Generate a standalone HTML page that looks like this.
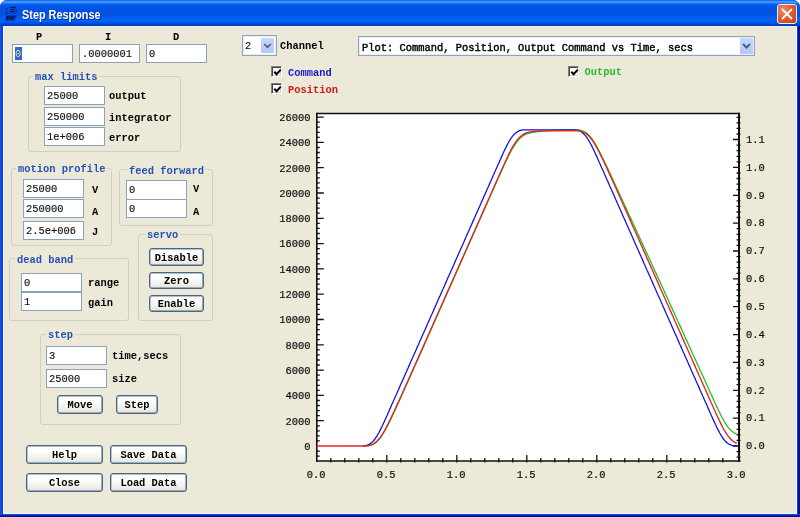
<!DOCTYPE html>
<html><head><meta charset="utf-8"><style>
*{box-sizing:border-box}
html,body{margin:0;padding:0}
body{width:800px;height:517px;overflow:hidden;background:#fff;position:relative;font-family:"Liberation Mono",monospace}
#win{will-change:transform;position:absolute;left:0;top:0;width:800px;height:517px;background:#0831d9;border-radius:7px 7px 0 0;overflow:hidden}
#title{position:absolute;left:0;top:0;width:800px;height:26px;
 background:linear-gradient(to bottom,#0a3fd0 0px,#3d95ff 1px,#3d95ff 2.5px,#0662f5 4px,#0054e3 7px,#0052de 14px,#0060f2 18px,#0064f8 21px,#0052e0 23px,#0040c4 25px,#0038b8 26px)}
#client{position:absolute;left:4px;top:27px;width:792px;height:486px;background:#ece9d8}
#wl{position:absolute;left:3px;top:26px;width:1px;height:488px;background:#f4f7ff}
#wr{position:absolute;left:796px;top:26px;width:1px;height:488px;background:#f4f7ff}
#wt{position:absolute;left:3px;top:26px;width:794px;height:1px;background:#e8eeff}
#wb{position:absolute;left:3px;top:513px;width:794px;height:1px;background:#f4f7ff}
#bl{position:absolute;left:0;top:26px;width:3px;height:491px;background:linear-gradient(to right,#1f5cf0,#0c46de 1.5px,#0a40d8 3px)}
#br{position:absolute;left:797px;top:26px;width:3px;height:491px;background:linear-gradient(to left,#001090,#00149c 1.5px,#2a50d0 3px)}
#bb{position:absolute;left:0;top:514px;width:800px;height:3px;background:linear-gradient(to bottom,#2d60ea 0,#0a2fc8 1px,#001a9c 2px,#00138c 3px)}
#ttext{position:absolute;left:22px;top:7px;font-family:"Liberation Sans",sans-serif;font-weight:bold;font-size:12.5px;line-height:16px;color:#fff;text-shadow:1px 1px 0 #0a2a9f;transform:scaleX(0.87);transform-origin:0 0}
#close{position:absolute;left:776.5px;top:4px;width:20px;height:19.5px;border:1px solid #e8eefc;border-radius:3px;
 background:radial-gradient(circle at 30% 30%,#f08a6a 0,#e0582e 50%,#c8401a 100%)}
#close svg{position:absolute;left:0;top:0}
.t{position:absolute;white-space:pre;font-size:10.42px;line-height:12px;color:#000;font-weight:bold}
.g{color:#2450b4}
.ed{position:absolute;background:#fff;border:1px solid #8ba2bd}
.et{position:absolute;white-space:pre;font-size:10.42px;line-height:12px;color:#111;font-weight:normal;-webkit-text-stroke:0.15px #111}
.grp{position:absolute;border:1px solid #d0d0bf;border-radius:3px}
.btn{position:absolute;padding-top:1px;border:1px solid #4a6786;border-radius:3px;background:linear-gradient(to bottom,#fff 0,#fbfbf9 40%,#f0f0ea 75%,#e3e2da 100%);box-shadow:inset 0 0 0 0.5px #6a8299,inset -1px -1px 0 #d6d0c5,inset 1px 1px 0 #fff;text-align:center;font-weight:bold;font-size:10.42px;color:#000;white-space:pre}
.ax{position:absolute;white-space:pre;font-size:10.42px;line-height:12px;color:#111;font-weight:normal;-webkit-text-stroke:0.2px #111}
.cb{position:absolute;width:11px;height:11px;background:#fff;border-top:1px solid #808080;border-left:1px solid #808080;border-right:1px solid #fff;border-bottom:1px solid #fff;box-shadow:inset 1px 1px 0 #404040,inset -1px -1px 0 #d4d0c8}
.cb svg{position:absolute;left:1px;top:1px}
.combo{position:absolute;background:#fff;border:1px solid #8ea4c0;box-shadow:inset 0 0 0 0.5px #d8e0ec}
.dd{position:absolute;background:linear-gradient(to bottom,#c6d6fc,#b4c8f6);border-radius:1px}
</style></head><body>
<div id="win">
 <div id="title"></div>
 <div id="bl"></div><div id="br"></div><div id="bb"></div>
 <div id="client"></div>
 <div id="wl"></div><div id="wr"></div><div id="wt"></div><div id="wb"></div>
 <svg style="position:absolute;left:2px;top:3px" width="20" height="20" viewBox="0 0 20 20">
  <g fill="#061a70">
   <rect x="8" y="3.8" width="5.8" height="1.4"/><rect x="8" y="6.2" width="4.8" height="1"/><rect x="8" y="8.2" width="4.8" height="1.2"/>
   <rect x="3.8" y="5" width="1.3" height="1.3"/><rect x="4" y="7.4" width="1.2" height="1.2"/><rect x="3" y="9.8" width="1.3" height="1.3"/><rect x="5.3" y="10" width="1.2" height="1.2"/>
   <rect x="13.8" y="7" width="1.3" height="1.3"/><rect x="12.8" y="9.8" width="1.3" height="1.3"/>
   <path d="M4.3 12.6h3.4l-1 4.8h-3.4z M8.2 12.6h4l-1 4.8h-4z M12.6 12.6h2.4l-0.3 1.2h-1.1l-0.8 3.6h-1.2z"/>
  </g>
  
 </svg>
 <div id="ttext">Step Response</div>
 <div id="close"><svg width="18" height="18"><path d="M4.5 4.5 L13.5 13.5 M13.5 4.5 L4.5 13.5" stroke="#fff" stroke-width="1.8" stroke-linecap="round"/></svg></div>

 <!-- PID -->
 <div class="t" style="left:36px;top:31px">P</div>
 <div class="t" style="left:105px;top:31px">I</div>
 <div class="t" style="left:173px;top:31px">D</div>
 <div class="ed" style="left:12px;top:44px;width:61px;height:19px"></div>
 <div style="position:absolute;left:15px;top:47px;width:7px;height:13px;background:#316ac5"></div>
 <div class="et" style="left:15px;top:48px;color:#fff">0</div>
 <div class="ed" style="left:79px;top:44px;width:61px;height:19px"></div>
 <div class="et" style="left:82px;top:48px">.0000001</div>
 <div class="ed" style="left:146px;top:44px;width:61px;height:19px"></div>
 <div class="et" style="left:149px;top:48px">0</div>

 <!-- max limits -->
 <div class="grp" style="left:28px;top:76px;width:153px;height:76px"></div>
 <div class="t g" style="left:33px;top:71.3px;background:#ece9d8;padding:0 2px">max limits</div>
 <div class="ed" style="left:44px;top:86px;width:61px;height:19px"></div>
 <div class="et" style="left:47px;top:90px">25000</div>
 <div class="t" style="left:109px;top:90px">output</div>
 <div class="ed" style="left:44px;top:107px;width:61px;height:19px"></div>
 <div class="et" style="left:47px;top:111px">250000</div>
 <div class="t" style="left:109px;top:111.5px">integrator</div>
 <div class="ed" style="left:44px;top:127px;width:61px;height:19px"></div>
 <div class="et" style="left:47px;top:131px">1e+006</div>
 <div class="t" style="left:109px;top:131.5px">error</div>

 <!-- motion profile -->
 <div class="grp" style="left:11px;top:168px;width:101px;height:78px"></div>
 <div class="t g" style="left:16px;top:163.3px;background:#ece9d8;padding:0 2px">motion profile</div>
 <div class="ed" style="left:23px;top:179px;width:61px;height:19px"></div>
 <div class="et" style="left:26px;top:183px">25000</div>
 <div class="t" style="left:92px;top:183.5px">V</div>
 <div class="ed" style="left:23px;top:199px;width:61px;height:19px"></div>
 <div class="et" style="left:26px;top:203px">250000</div>
 <div class="t" style="left:92px;top:206px">A</div>
 <div class="ed" style="left:23px;top:221px;width:61px;height:19px"></div>
 <div class="et" style="left:26px;top:225px">2.5e+006</div>
 <div class="t" style="left:92px;top:226.3px">J</div>

 <!-- feed forward -->
 <div class="grp" style="left:119px;top:169px;width:94px;height:57px"></div>
 <div class="t g" style="left:127px;top:165px;background:#ece9d8;padding:0 2px">feed forward</div>
 <div class="ed" style="left:126px;top:180px;width:61px;height:20px"></div>
 <div class="et" style="left:129px;top:184px">0</div>
 <div class="t" style="left:193px;top:183px">V</div>
 <div class="ed" style="left:126px;top:199px;width:61px;height:19px"></div>
 <div class="et" style="left:129px;top:203px">0</div>
 <div class="t" style="left:193px;top:206px">A</div>

 <!-- servo -->
 <div class="grp" style="left:138px;top:234px;width:75px;height:87px"></div>
 <div class="t g" style="left:145px;top:229px;background:#ece9d8;padding:0 2px">servo</div>
 <div class="btn" style="left:149px;top:248px;width:55px;height:18px;line-height:16px">Disable</div>
 <div class="btn" style="left:149px;top:272px;width:55px;height:17px;line-height:15px">Zero</div>
 <div class="btn" style="left:149px;top:295px;width:55px;height:17px;line-height:15px">Enable</div>

 <!-- dead band -->
 <div class="grp" style="left:9px;top:258px;width:120px;height:63px"></div>
 <div class="t g" style="left:15px;top:253.7px;background:#ece9d8;padding:0 2px">dead band</div>
 <div class="ed" style="left:21px;top:273px;width:61px;height:19px"></div>
 <div class="et" style="left:24px;top:277px">0</div>
 <div class="t" style="left:88px;top:277px">range</div>
 <div class="ed" style="left:21px;top:292px;width:61px;height:19px"></div>
 <div class="et" style="left:24px;top:296px">1</div>
 <div class="t" style="left:88px;top:297px">gain</div>

 <!-- step -->
 <div class="grp" style="left:40px;top:334px;width:141px;height:91px"></div>
 <div class="t g" style="left:46px;top:328.7px;background:#ece9d8;padding:0 2px">step</div>
 <div class="ed" style="left:46px;top:346px;width:61px;height:19px"></div>
 <div class="et" style="left:49px;top:350px">3</div>
 <div class="t" style="left:112px;top:350px">time,secs</div>
 <div class="ed" style="left:46px;top:369px;width:61px;height:19px"></div>
 <div class="et" style="left:49px;top:373px">25000</div>
 <div class="t" style="left:112px;top:373px">size</div>
 <div class="btn" style="left:57px;top:395px;width:46px;height:19px;line-height:17px">Move</div>
 <div class="btn" style="left:116px;top:395px;width:42px;height:19px;line-height:17px">Step</div>

 <!-- bottom buttons -->
 <div class="btn" style="left:26px;top:445px;width:77px;height:19px;line-height:17px">Help</div>
 <div class="btn" style="left:110px;top:445px;width:77px;height:19px;line-height:17px">Save Data</div>
 <div class="btn" style="left:26px;top:473px;width:77px;height:19px;line-height:17px">Close</div>
 <div class="btn" style="left:110px;top:473px;width:77px;height:19px;line-height:17px">Load Data</div>

 <!-- channel combo -->
 <div class="combo" style="left:241.5px;top:35px;width:35.5px;height:21px"></div>
 <div class="dd" style="left:261px;top:37.5px;width:13px;height:15.5px"><svg width="13" height="16"><path d="M3.2 6 L6.5 9.2 L9.8 6" fill="none" stroke="#4d6185" stroke-width="1.7"/></svg></div>
 <div class="et" style="left:245px;top:40px">2</div>
 <div class="t" style="left:280px;top:40px">Channel</div>

 <!-- plot combo -->
 <div class="combo" style="left:358px;top:36px;width:397px;height:20px"></div>
 <div class="dd" style="left:740px;top:38px;width:13px;height:16px"><svg width="13" height="16"><path d="M3 6 L6.5 9.5 L10 6" fill="none" stroke="#4d6185" stroke-width="2"/></svg></div>
 <div class="t" style="left:362px;top:41.7px;font-weight:normal;-webkit-text-stroke:0.4px #000">Plot: Command, Position, Output Command vs Time, secs</div>

 <!-- checkboxes -->
 <div class="cb" style="left:271px;top:66px"><svg width="9" height="9"><path d="M1.3 3.8 L3.6 6.3 L7.8 1.6" fill="none" stroke="#000" stroke-width="2.1"/></svg></div>
 <div class="t" style="left:288px;top:66.5px;color:#1818d0">Command</div>
 <div class="cb" style="left:271px;top:83px"><svg width="9" height="9"><path d="M1.3 3.8 L3.6 6.3 L7.8 1.6" fill="none" stroke="#000" stroke-width="2.1"/></svg></div>
 <div class="t" style="left:288px;top:83.5px;color:#d01818">Position</div>
 <div class="cb" style="left:568px;top:66px"><svg width="9" height="9"><path d="M1.3 3.8 L3.6 6.3 L7.8 1.6" fill="none" stroke="#000" stroke-width="2.1"/></svg></div>
 <div class="t" style="left:584.5px;top:65.8px;color:#2cba2c">Output</div>

<svg style="position:absolute;left:0;top:0" width="800" height="517">
<rect x="316.8" y="113.5" width="421.7" height="347.5" fill="#fff"/>
<path d="M316.8 113.5 H739.5" fill="none" stroke="#101010" stroke-width="1.4"/>
<path d="M316.8 112.8 V461.8" fill="none" stroke="#101010" stroke-width="1.6"/>
<path d="M316.0 461.0 H740.5" fill="none" stroke="#101010" stroke-width="1.6"/>
<path d="M739.0 112.8 V461.8" fill="none" stroke="#101010" stroke-width="2"/>
<path d="M316.8 456.1h3 M316.8 451.1h3 M316.8 440.9h3 M316.8 435.9h3 M316.8 430.8h3 M316.8 425.8h3 M316.8 420.7h7 M316.8 415.6h3 M316.8 410.6h3 M316.8 405.5h3 M316.8 400.5h3 M316.8 395.4h7 M316.8 390.3h3 M316.8 385.3h3 M316.8 380.2h3 M316.8 375.2h3 M316.8 370.1h7 M316.8 365.0h3 M316.8 360.0h3 M316.8 354.9h3 M316.8 349.9h3 M316.8 344.8h7 M316.8 339.7h3 M316.8 334.7h3 M316.8 329.6h3 M316.8 324.6h3 M316.8 319.5h7 M316.8 314.4h3 M316.8 309.4h3 M316.8 304.3h3 M316.8 299.3h3 M316.8 294.2h7 M316.8 289.1h3 M316.8 284.1h3 M316.8 279.0h3 M316.8 274.0h3 M316.8 268.9h7 M316.8 263.8h3 M316.8 258.8h3 M316.8 253.7h3 M316.8 248.7h3 M316.8 243.6h7 M316.8 238.5h3 M316.8 233.5h3 M316.8 228.4h3 M316.8 223.4h3 M316.8 218.3h7 M316.8 213.2h3 M316.8 208.2h3 M316.8 203.1h3 M316.8 198.1h3 M316.8 193.0h7 M316.8 187.9h3 M316.8 182.9h3 M316.8 177.8h3 M316.8 172.8h3 M316.8 167.7h7 M316.8 162.6h3 M316.8 157.6h3 M316.8 152.5h3 M316.8 147.5h3 M316.8 142.4h7 M316.8 137.3h3 M316.8 132.3h3 M316.8 127.2h3 M316.8 122.2h3 M316.8 117.1h7 M736.5 457.1h4 M736.5 451.6h4 M733.0 446.0h6 M736.5 440.4h4 M736.5 434.9h4 M736.5 429.3h4 M736.5 423.7h4 M733.0 418.1h6 M736.5 412.6h4 M736.5 407.0h4 M736.5 401.4h4 M736.5 395.9h4 M733.0 390.3h6 M736.5 384.7h4 M736.5 379.1h4 M736.5 373.6h4 M736.5 368.0h4 M733.0 362.4h6 M736.5 356.8h4 M736.5 351.3h4 M736.5 345.7h4 M736.5 340.1h4 M733.0 334.6h6 M736.5 329.0h4 M736.5 323.4h4 M736.5 317.8h4 M736.5 312.3h4 M733.0 306.7h6 M736.5 301.1h4 M736.5 295.6h4 M736.5 290.0h4 M736.5 284.4h4 M733.0 278.8h6 M736.5 273.3h4 M736.5 267.7h4 M736.5 262.1h4 M736.5 256.6h4 M733.0 251.0h6 M736.5 245.4h4 M736.5 239.8h4 M736.5 234.3h4 M736.5 228.7h4 M733.0 223.1h6 M736.5 217.5h4 M736.5 212.0h4 M736.5 206.4h4 M736.5 200.8h4 M733.0 195.3h6 M736.5 189.7h4 M736.5 184.1h4 M736.5 178.5h4 M736.5 173.0h4 M733.0 167.4h6 M736.5 161.8h4 M736.5 156.3h4 M736.5 150.7h4 M736.5 145.1h4 M733.0 139.5h6 M736.5 134.0h4 M736.5 128.4h4 M736.5 122.8h4 M736.5 117.3h4 M330.8 462.5v-4.5 M344.8 462.5v-4.5 M358.8 462.5v-4.5 M372.8 462.5v-4.5 M386.8 462.5v-7.5 M400.8 462.5v-4.5 M414.8 462.5v-4.5 M428.8 462.5v-4.5 M442.8 462.5v-4.5 M456.8 462.5v-7.5 M470.8 462.5v-4.5 M484.8 462.5v-4.5 M498.8 462.5v-4.5 M512.8 462.5v-4.5 M526.8 462.5v-7.5 M540.8 462.5v-4.5 M554.8 462.5v-4.5 M568.8 462.5v-4.5 M582.8 462.5v-4.5 M596.8 462.5v-7.5 M610.8 462.5v-4.5 M624.8 462.5v-4.5 M638.8 462.5v-4.5 M652.8 462.5v-4.5 M666.8 462.5v-7.5 M680.8 462.5v-4.5 M694.8 462.5v-4.5 M708.8 462.5v-4.5 M722.8 462.5v-4.5" fill="none" stroke="#101010" stroke-width="1.3"/>
<polyline fill="none" stroke="#1fbf1f" stroke-width="1.3" points="363.3,446.0 363.8,446.0 364.4,446.0 365.0,445.9 365.5,445.9 366.1,445.9 366.6,445.8 367.2,445.8 367.8,445.7 368.3,445.7 368.9,445.6 369.4,445.5 370.0,445.4 370.6,445.2 371.1,445.1 371.7,444.9 372.2,444.6 372.8,444.4 373.4,444.1 373.9,443.8 374.5,443.5 375.0,443.1 375.6,442.7 376.2,442.2 376.7,441.7 377.3,441.2 377.8,440.6 378.4,440.0 379.0,439.4 379.5,438.7 380.1,438.0 380.6,437.3 381.2,436.5 381.8,435.7 382.3,434.9 382.9,434.0 383.4,433.1 384.0,432.1 384.6,431.2 385.1,430.2 385.7,429.2 386.2,428.2 386.8,427.1 387.4,426.1 387.9,425.0 388.5,423.8 389.0,422.7 389.6,421.6 390.2,420.4 390.7,419.3 391.3,418.1 391.8,416.9 392.4,415.7 393.0,414.5 393.5,413.3 394.1,412.1 394.6,410.9 395.2,409.7 395.8,408.5 396.3,407.3 396.9,406.0 397.4,404.8 398.0,403.6 398.6,402.3 399.1,401.1 399.7,399.9 400.2,398.6 400.8,397.4 401.4,396.2 401.9,394.9 402.5,393.7 403.0,392.4 403.6,391.2 404.2,389.9 404.7,388.7 405.3,387.4 405.8,386.2 406.4,384.9 407.0,383.7 407.5,382.4 408.1,381.1 408.6,379.9 409.2,378.6 409.8,377.4 410.3,376.1 410.9,374.9 411.4,373.6 412.0,372.3 412.6,371.1 413.1,369.8 413.7,368.6 414.2,367.3 414.8,366.0 415.4,364.8 415.9,363.5 416.5,362.3 417.0,361.0 417.6,359.7 418.2,358.5 418.7,357.2 419.3,356.0 419.8,354.7 420.4,353.4 421.0,352.2 421.5,350.9 422.1,349.7 422.6,348.4 423.2,347.1 423.8,345.9 424.3,344.6 424.9,343.3 425.4,342.1 426.0,340.8 426.6,339.6 427.1,338.3 427.7,337.0 428.2,335.8 428.8,334.5 429.4,333.2 429.9,332.0 430.5,330.7 431.0,329.5 431.6,328.2 432.2,326.9 432.7,325.7 433.3,324.4 433.8,323.1 434.4,321.9 435.0,320.6 435.5,319.4 436.1,318.1 436.6,316.8 437.2,315.6 437.8,314.3 438.3,313.0 438.9,311.8 439.4,310.5 440.0,309.3 440.6,308.0 441.1,306.7 441.7,305.5 442.2,304.2 442.8,302.9 443.4,301.7 443.9,300.4 444.5,299.1 445.0,297.9 445.6,296.6 446.2,295.4 446.7,294.1 447.3,292.8 447.8,291.6 448.4,290.3 449.0,289.0 449.5,287.8 450.1,286.5 450.6,285.2 451.2,284.0 451.8,282.7 452.3,281.5 452.9,280.2 453.4,278.9 454.0,277.7 454.6,276.4 455.1,275.1 455.7,273.9 456.2,272.6 456.8,271.3 457.4,270.1 457.9,268.8 458.5,267.6 459.0,266.3 459.6,265.0 460.2,263.8 460.7,262.5 461.3,261.2 461.8,260.0 462.4,258.7 463.0,257.4 463.5,256.2 464.1,254.9 464.6,253.7 465.2,252.4 465.8,251.1 466.3,249.9 466.9,248.6 467.4,247.3 468.0,246.1 468.6,244.8 469.1,243.5 469.7,242.3 470.2,241.0 470.8,239.8 471.4,238.5 471.9,237.2 472.5,236.0 473.0,234.7 473.6,233.4 474.2,232.2 474.7,230.9 475.3,229.6 475.8,228.4 476.4,227.1 477.0,225.9 477.5,224.6 478.1,223.3 478.6,222.1 479.2,220.8 479.8,219.5 480.3,218.3 480.9,217.0 481.4,215.7 482.0,214.5 482.6,213.2 483.1,212.0 483.7,210.7 484.2,209.4 484.8,208.2 485.4,206.9 485.9,205.6 486.5,204.4 487.0,203.1 487.6,201.8 488.2,200.6 488.7,199.3 489.3,198.1 489.8,196.8 490.4,195.5 491.0,194.3 491.5,193.0 492.1,191.7 492.6,190.5 493.2,189.2 493.8,187.9 494.3,186.7 494.9,185.4 495.4,184.1 496.0,182.9 496.6,181.6 497.1,180.4 497.7,179.1 498.2,177.8 498.8,176.6 499.4,175.4 499.9,174.1 500.5,172.9 501.0,171.7 501.6,170.5 502.2,169.3 502.7,168.1 503.3,166.9 503.8,165.7 504.4,164.5 505.0,163.3 505.5,162.1 506.1,160.9 506.6,159.8 507.2,158.6 507.8,157.5 508.3,156.3 508.9,155.2 509.4,154.1 510.0,153.1 510.6,152.0 511.1,151.0 511.7,150.0 512.2,149.0 512.8,148.1 513.4,147.1 513.9,146.3 514.5,145.4 515.0,144.6 515.6,143.8 516.2,143.0 516.7,142.2 517.3,141.5 517.8,140.8 518.4,140.1 519.0,139.4 519.5,138.9 520.1,138.3 520.6,137.8 521.2,137.3 521.8,136.8 522.3,136.4 522.9,136.0 523.4,135.6 524.0,135.3 524.6,134.9 525.1,134.7 525.7,134.4 526.2,134.1 526.8,133.9 527.4,133.7 527.9,133.5 528.5,133.3 529.0,133.2 529.6,133.0 530.2,132.9 530.7,132.8 531.3,132.6 531.8,132.5 532.4,132.4 533.0,132.3 533.5,132.2 534.1,132.1 534.6,132.1 535.2,132.0 535.8,131.9 536.3,131.8 536.9,131.8 537.4,131.7 538.0,131.6 538.6,131.6 539.1,131.5 539.7,131.4 540.2,131.4 540.8,131.3 541.4,131.3 541.9,131.2 542.5,131.2 543.0,131.1 543.6,131.1 544.2,131.1 544.7,131.0 545.3,131.0 545.8,130.9 546.4,130.9 547.0,130.8 547.5,130.8 548.1,130.8 548.6,130.7 549.2,130.7 549.8,130.7 550.3,130.6 550.9,130.6 551.4,130.5 552.0,130.5 552.6,130.5 553.1,130.4 553.7,130.4 554.2,130.4 554.8,130.3 555.4,130.3 555.9,130.3 556.5,130.3 557.0,130.2 557.6,130.2 558.2,130.2 558.7,130.2 559.3,130.1 559.8,130.1 560.4,130.1 561.0,130.1 561.5,130.1 562.1,130.0 562.6,130.0 563.2,130.0 563.8,130.0 564.3,129.9 564.9,129.9 565.4,129.9 566.0,129.9 566.6,129.9 567.1,129.8 567.7,129.8 568.2,129.8 568.8,129.8 569.4,129.8 569.9,129.8 570.5,129.8 571.0,129.8 571.6,129.8 572.2,129.8 572.7,129.8 573.3,129.8 573.8,129.8 574.4,129.8 575.0,129.8 575.5,129.8 576.1,129.8 576.6,129.8 577.2,129.9 577.8,129.9 578.3,130.0 578.9,130.0 579.4,130.1 580.0,130.2 580.6,130.3 581.1,130.5 581.7,130.6 582.2,130.8 582.8,131.0 583.4,131.2 583.9,131.5 584.5,131.8 585.0,132.1 585.6,132.4 586.2,132.8 586.7,133.2 587.3,133.7 587.8,134.2 588.4,134.7 589.0,135.2 589.5,135.8 590.1,136.5 590.6,137.2 591.2,137.9 591.8,138.6 592.3,139.4 592.9,140.2 593.4,141.1 594.0,141.9 594.6,142.8 595.1,143.8 595.7,144.7 596.2,145.7 596.8,146.7 597.4,147.7 597.9,148.8 598.5,149.8 599.0,150.9 599.6,151.9 600.2,153.0 600.7,154.1 601.3,155.2 601.8,156.3 602.4,157.5 603.0,158.6 603.5,159.7 604.1,160.9 604.6,162.1 605.2,163.2 605.8,164.4 606.3,165.6 606.9,166.7 607.4,167.9 608.0,169.1 608.6,170.3 609.1,171.5 609.7,172.7 610.2,173.9 610.8,175.1 611.4,176.3 611.9,177.5 612.5,178.7 613.0,179.9 613.6,181.1 614.2,182.3 614.7,183.5 615.3,184.8 615.8,186.0 616.4,187.2 617.0,188.4 617.5,189.6 618.1,190.8 618.6,192.1 619.2,193.3 619.8,194.5 620.3,195.7 620.9,196.9 621.4,198.1 622.0,199.4 622.6,200.6 623.1,201.8 623.7,203.0 624.2,204.3 624.8,205.5 625.4,206.7 625.9,207.9 626.5,209.1 627.0,210.3 627.6,211.5 628.2,212.8 628.7,214.0 629.3,215.2 629.8,216.4 630.4,217.6 631.0,218.8 631.5,220.1 632.1,221.3 632.6,222.5 633.2,223.7 633.8,224.9 634.3,226.1 634.9,227.3 635.4,228.6 636.0,229.8 636.6,231.0 637.1,232.2 637.7,233.4 638.2,234.6 638.8,235.9 639.4,237.1 639.9,238.3 640.5,239.5 641.0,240.7 641.6,241.9 642.2,243.2 642.7,244.4 643.3,245.6 643.8,246.8 644.4,248.0 645.0,249.3 645.5,250.5 646.1,251.7 646.6,252.9 647.2,254.1 647.8,255.3 648.3,256.6 648.9,257.8 649.4,259.0 650.0,260.2 650.6,261.4 651.1,262.6 651.7,263.9 652.2,265.1 652.8,266.3 653.4,267.5 653.9,268.7 654.5,270.0 655.0,271.2 655.6,272.4 656.2,273.6 656.7,274.8 657.3,276.0 657.8,277.3 658.4,278.5 659.0,279.7 659.5,280.9 660.1,282.1 660.6,283.3 661.2,284.6 661.8,285.8 662.3,287.0 662.9,288.2 663.4,289.5 664.0,290.7 664.6,291.9 665.1,293.2 665.7,294.4 666.2,295.6 666.8,296.8 667.4,298.1 667.9,299.3 668.5,300.5 669.0,301.8 669.6,303.0 670.2,304.2 670.7,305.5 671.3,306.7 671.8,307.9 672.4,309.1 673.0,310.4 673.5,311.6 674.1,312.8 674.6,314.1 675.2,315.3 675.8,316.5 676.3,317.8 676.9,319.0 677.4,320.2 678.0,321.5 678.6,322.7 679.1,323.9 679.7,325.1 680.2,326.4 680.8,327.6 681.4,328.8 681.9,330.1 682.5,331.3 683.0,332.5 683.6,333.8 684.2,335.0 684.7,336.2 685.3,337.5 685.8,338.7 686.4,339.9 687.0,341.1 687.5,342.4 688.1,343.6 688.6,344.8 689.2,346.1 689.8,347.3 690.3,348.5 690.9,349.8 691.4,351.0 692.0,352.2 692.6,353.5 693.1,354.7 693.7,355.9 694.2,357.1 694.8,358.4 695.4,359.6 695.9,360.8 696.5,362.1 697.0,363.3 697.6,364.5 698.2,365.8 698.7,367.0 699.3,368.2 699.8,369.4 700.4,370.7 701.0,371.9 701.5,373.1 702.1,374.4 702.6,375.6 703.2,376.8 703.8,378.1 704.3,379.3 704.9,380.5 705.4,381.8 706.0,383.0 706.6,384.3 707.1,385.5 707.7,386.7 708.2,388.0 708.8,389.2 709.4,390.4 709.9,391.7 710.5,392.9 711.0,394.1 711.6,395.4 712.2,396.6 712.7,397.8 713.3,399.1 713.8,400.3 714.4,401.5 715.0,402.7 715.5,404.0 716.1,405.2 716.6,406.4 717.2,407.6 717.8,408.8 718.3,410.0 718.9,411.1 719.4,412.3 720.0,413.4 720.6,414.5 721.1,415.6 721.7,416.7 722.2,417.8 722.8,418.8 723.4,419.8 723.9,420.8 724.5,421.8 725.0,422.7 725.6,423.6 726.2,424.5 726.7,425.3 727.3,426.1 727.8,426.9 728.4,427.6 729.0,428.3 729.5,428.9 730.1,429.5 730.6,430.1 731.2,430.6 731.8,431.1 732.3,431.6 732.9,432.0 733.4,432.4 734.0,432.8 734.6,433.1 735.1,433.4 735.7,433.7 736.2,433.9 736.8,434.2 736.8,434.2"/>
<polyline fill="none" stroke="#1010e0" stroke-width="1.3" points="363.3,445.9 363.8,445.8 364.4,445.8 365.0,445.7 365.5,445.6 366.1,445.5 366.6,445.3 367.2,445.1 367.8,444.9 368.3,444.7 368.9,444.4 369.4,444.1 370.0,443.8 370.6,443.4 371.1,443.0 371.7,442.5 372.2,442.0 372.8,441.5 373.4,440.9 373.9,440.2 374.5,439.5 375.0,438.8 375.6,438.0 376.2,437.2 376.7,436.3 377.3,435.4 377.8,434.5 378.4,433.5 379.0,432.5 379.5,431.4 380.1,430.4 380.6,429.3 381.2,428.1 381.8,427.0 382.3,425.8 382.9,424.6 383.4,423.4 384.0,422.2 384.6,421.0 385.1,419.7 385.7,418.5 386.2,417.2 386.8,416.0 387.4,414.7 387.9,413.4 388.5,412.2 389.0,410.9 389.6,409.6 390.2,408.4 390.7,407.1 391.3,405.8 391.8,404.6 392.4,403.3 393.0,402.0 393.5,400.8 394.1,399.5 394.6,398.2 395.2,397.0 395.8,395.7 396.3,394.5 396.9,393.2 397.4,391.9 398.0,390.7 398.6,389.4 399.1,388.1 399.7,386.9 400.2,385.6 400.8,384.3 401.4,383.1 401.9,381.8 402.5,380.5 403.0,379.3 403.6,378.0 404.2,376.7 404.7,375.5 405.3,374.2 405.8,372.9 406.4,371.7 407.0,370.4 407.5,369.2 408.1,367.9 408.6,366.6 409.2,365.4 409.8,364.1 410.3,362.8 410.9,361.6 411.4,360.3 412.0,359.0 412.6,357.8 413.1,356.5 413.7,355.2 414.2,354.0 414.8,352.7 415.4,351.4 415.9,350.2 416.5,348.9 417.0,347.6 417.6,346.4 418.2,345.1 418.7,343.9 419.3,342.6 419.8,341.3 420.4,340.1 421.0,338.8 421.5,337.5 422.1,336.3 422.6,335.0 423.2,333.7 423.8,332.5 424.3,331.2 424.9,329.9 425.4,328.7 426.0,327.4 426.6,326.1 427.1,324.9 427.7,323.6 428.2,322.3 428.8,321.1 429.4,319.8 429.9,318.6 430.5,317.3 431.0,316.0 431.6,314.8 432.2,313.5 432.7,312.2 433.3,311.0 433.8,309.7 434.4,308.4 435.0,307.2 435.5,305.9 436.1,304.6 436.6,303.4 437.2,302.1 437.8,300.8 438.3,299.6 438.9,298.3 439.4,297.0 440.0,295.8 440.6,294.5 441.1,293.3 441.7,292.0 442.2,290.7 442.8,289.5 443.4,288.2 443.9,286.9 444.5,285.7 445.0,284.4 445.6,283.1 446.2,281.9 446.7,280.6 447.3,279.3 447.8,278.1 448.4,276.8 449.0,275.5 449.5,274.3 450.1,273.0 450.6,271.7 451.2,270.5 451.8,269.2 452.3,268.0 452.9,266.7 453.4,265.4 454.0,264.2 454.6,262.9 455.1,261.6 455.7,260.4 456.2,259.1 456.8,257.8 457.4,256.6 457.9,255.3 458.5,254.0 459.0,252.8 459.6,251.5 460.2,250.2 460.7,249.0 461.3,247.7 461.8,246.4 462.4,245.2 463.0,243.9 463.5,242.7 464.1,241.4 464.6,240.1 465.2,238.9 465.8,237.6 466.3,236.3 466.9,235.1 467.4,233.8 468.0,232.5 468.6,231.3 469.1,230.0 469.7,228.7 470.2,227.5 470.8,226.2 471.4,224.9 471.9,223.7 472.5,222.4 473.0,221.1 473.6,219.9 474.2,218.6 474.7,217.4 475.3,216.1 475.8,214.8 476.4,213.6 477.0,212.3 477.5,211.0 478.1,209.8 478.6,208.5 479.2,207.2 479.8,206.0 480.3,204.7 480.9,203.4 481.4,202.2 482.0,200.9 482.6,199.6 483.1,198.4 483.7,197.1 484.2,195.8 484.8,194.6 485.4,193.3 485.9,192.1 486.5,190.8 487.0,189.5 487.6,188.3 488.2,187.0 488.7,185.7 489.3,184.5 489.8,183.2 490.4,181.9 491.0,180.7 491.5,179.4 492.1,178.1 492.6,176.9 493.2,175.6 493.8,174.3 494.3,173.1 494.9,171.8 495.4,170.5 496.0,169.3 496.6,168.0 497.1,166.8 497.7,165.5 498.2,164.2 498.8,163.0 499.4,161.7 499.9,160.4 500.5,159.2 501.0,157.9 501.6,156.6 502.2,155.4 502.7,154.2 503.3,152.9 503.8,151.7 504.4,150.5 505.0,149.4 505.5,148.2 506.1,147.1 506.6,145.9 507.2,144.9 507.8,143.8 508.3,142.8 508.9,141.8 509.4,140.8 510.0,139.9 510.6,139.0 511.1,138.1 511.7,137.3 512.2,136.6 512.8,135.9 513.4,135.2 513.9,134.6 514.5,134.0 515.0,133.5 515.6,133.0 516.2,132.6 516.7,132.2 517.3,131.8 517.8,131.5 518.4,131.2 519.0,130.9 519.5,130.7 520.1,130.5 520.6,130.4 521.2,130.2 521.8,130.1 522.3,130.0 522.9,129.9 523.4,129.9 524.0,129.8 524.6,129.8 525.1,129.8 525.7,129.8 526.2,129.8 526.8,129.8 527.4,129.8 527.9,129.8 528.5,129.8 529.0,129.8 529.6,129.8 530.2,129.8 530.7,129.8 531.3,129.8 531.8,129.8 532.4,129.8 533.0,129.8 533.5,129.8 534.1,129.8 534.6,129.8 535.2,129.8 535.8,129.8 536.3,129.8 536.9,129.8 537.4,129.8 538.0,129.8 538.6,129.8 539.1,129.8 539.7,129.8 540.2,129.8 540.8,129.8 541.4,129.8 541.9,129.8 542.5,129.8 543.0,129.8 543.6,129.8 544.2,129.8 544.7,129.8 545.3,129.8 545.8,129.8 546.4,129.8 547.0,129.8 547.5,129.8 548.1,129.8 548.6,129.8 549.2,129.8 549.8,129.8 550.3,129.8 550.9,129.8 551.4,129.8 552.0,129.8 552.6,129.8 553.1,129.8 553.7,129.8 554.2,129.8 554.8,129.8 555.4,129.8 555.9,129.8 556.5,129.8 557.0,129.8 557.6,129.8 558.2,129.8 558.7,129.8 559.3,129.8 559.8,129.8 560.4,129.8 561.0,129.8 561.5,129.8 562.1,129.8 562.6,129.8 563.2,129.8 563.8,129.8 564.3,129.8 564.9,129.8 565.4,129.8 566.0,129.8 566.6,129.8 567.1,129.8 567.7,129.8 568.2,129.8 568.8,129.8 569.4,129.8 569.9,129.8 570.5,129.8 571.0,129.8 571.6,129.8 572.2,129.8 572.7,129.8 573.3,129.8 573.8,129.8 574.4,129.8 575.0,129.9 575.5,129.9 576.1,130.0 576.6,130.1 577.2,130.2 577.8,130.4 578.3,130.5 578.9,130.7 579.4,130.9 580.0,131.2 580.6,131.5 581.1,131.8 581.7,132.2 582.2,132.6 582.8,133.0 583.4,133.5 583.9,134.0 584.5,134.6 585.0,135.2 585.6,135.9 586.2,136.6 586.7,137.3 587.3,138.1 587.8,139.0 588.4,139.9 589.0,140.8 589.5,141.8 590.1,142.8 590.6,143.8 591.2,144.9 591.8,145.9 592.3,147.1 592.9,148.2 593.4,149.4 594.0,150.5 594.6,151.7 595.1,152.9 595.7,154.2 596.2,155.4 596.8,156.6 597.4,157.9 597.9,159.2 598.5,160.4 599.0,161.7 599.6,163.0 600.2,164.2 600.7,165.5 601.3,166.8 601.8,168.0 602.4,169.3 603.0,170.5 603.5,171.8 604.1,173.1 604.6,174.3 605.2,175.6 605.8,176.9 606.3,178.1 606.9,179.4 607.4,180.7 608.0,181.9 608.6,183.2 609.1,184.5 609.7,185.7 610.2,187.0 610.8,188.3 611.4,189.5 611.9,190.8 612.5,192.1 613.0,193.3 613.6,194.6 614.2,195.8 614.7,197.1 615.3,198.4 615.8,199.6 616.4,200.9 617.0,202.2 617.5,203.4 618.1,204.7 618.6,206.0 619.2,207.2 619.8,208.5 620.3,209.8 620.9,211.0 621.4,212.3 622.0,213.6 622.6,214.8 623.1,216.1 623.7,217.4 624.2,218.6 624.8,219.9 625.4,221.1 625.9,222.4 626.5,223.7 627.0,224.9 627.6,226.2 628.2,227.5 628.7,228.7 629.3,230.0 629.8,231.3 630.4,232.5 631.0,233.8 631.5,235.1 632.1,236.3 632.6,237.6 633.2,238.9 633.8,240.1 634.3,241.4 634.9,242.7 635.4,243.9 636.0,245.2 636.6,246.4 637.1,247.7 637.7,249.0 638.2,250.2 638.8,251.5 639.4,252.8 639.9,254.0 640.5,255.3 641.0,256.6 641.6,257.8 642.2,259.1 642.7,260.4 643.3,261.6 643.8,262.9 644.4,264.2 645.0,265.4 645.5,266.7 646.1,268.0 646.6,269.2 647.2,270.5 647.8,271.7 648.3,273.0 648.9,274.3 649.4,275.5 650.0,276.8 650.6,278.1 651.1,279.3 651.7,280.6 652.2,281.9 652.8,283.1 653.4,284.4 653.9,285.7 654.5,286.9 655.0,288.2 655.6,289.5 656.2,290.7 656.7,292.0 657.3,293.3 657.8,294.5 658.4,295.8 659.0,297.0 659.5,298.3 660.1,299.6 660.6,300.8 661.2,302.1 661.8,303.4 662.3,304.6 662.9,305.9 663.4,307.2 664.0,308.4 664.6,309.7 665.1,311.0 665.7,312.2 666.2,313.5 666.8,314.8 667.4,316.0 667.9,317.3 668.5,318.6 669.0,319.8 669.6,321.1 670.2,322.3 670.7,323.6 671.3,324.9 671.8,326.1 672.4,327.4 673.0,328.7 673.5,329.9 674.1,331.2 674.6,332.5 675.2,333.7 675.8,335.0 676.3,336.3 676.9,337.5 677.4,338.8 678.0,340.1 678.6,341.3 679.1,342.6 679.7,343.9 680.2,345.1 680.8,346.4 681.4,347.6 681.9,348.9 682.5,350.2 683.0,351.4 683.6,352.7 684.2,354.0 684.7,355.2 685.3,356.5 685.8,357.8 686.4,359.0 687.0,360.3 687.5,361.6 688.1,362.8 688.6,364.1 689.2,365.4 689.8,366.6 690.3,367.9 690.9,369.2 691.4,370.4 692.0,371.7 692.6,372.9 693.1,374.2 693.7,375.5 694.2,376.7 694.8,378.0 695.4,379.3 695.9,380.5 696.5,381.8 697.0,383.1 697.6,384.3 698.2,385.6 698.7,386.9 699.3,388.1 699.8,389.4 700.4,390.7 701.0,391.9 701.5,393.2 702.1,394.5 702.6,395.7 703.2,397.0 703.8,398.2 704.3,399.5 704.9,400.8 705.4,402.0 706.0,403.3 706.6,404.6 707.1,405.8 707.7,407.1 708.2,408.4 708.8,409.6 709.4,410.9 709.9,412.2 710.5,413.4 711.0,414.7 711.6,416.0 712.2,417.2 712.7,418.5 713.3,419.7 713.8,421.0 714.4,422.2 715.0,423.4 715.5,424.6 716.1,425.8 716.6,427.0 717.2,428.1 717.8,429.3 718.3,430.4 718.9,431.4 719.4,432.5 720.0,433.5 720.6,434.5 721.1,435.4 721.7,436.3 722.2,437.2 722.8,438.0 723.4,438.8 723.9,439.5 724.5,440.2 725.0,440.9 725.6,441.5 726.2,442.0 726.7,442.5 727.3,443.0 727.8,443.4 728.4,443.8 729.0,444.1 729.5,444.4 730.1,444.7 730.6,444.9 731.2,445.1 731.8,445.3 732.3,445.5 732.9,445.6 733.4,445.7 734.0,445.8 734.6,445.8 735.1,445.9 735.7,445.9 736.2,446.0 736.8,446.0 736.8,446.0"/>
<polyline fill="none" stroke="#e02828" stroke-width="1.4" points="316.8,446.0 317.4,446.0 317.9,446.0 318.5,446.0 319.0,446.0 319.6,446.0 320.2,446.0 320.7,446.0 321.3,446.0 321.8,446.0 322.4,446.0 323.0,446.0 323.5,446.0 324.1,446.0 324.6,446.0 325.2,446.0 325.8,446.0 326.3,446.0 326.9,446.0 327.4,446.0 328.0,446.0 328.6,446.0 329.1,446.0 329.7,446.0 330.2,446.0 330.8,446.0 331.4,446.0 331.9,446.0 332.5,446.0 333.0,446.0 333.6,446.0 334.2,446.0 334.7,446.0 335.3,446.0 335.8,446.0 336.4,446.0 337.0,446.0 337.5,446.0 338.1,446.0 338.6,446.0 339.2,446.0 339.8,446.0 340.3,446.0 340.9,446.0 341.4,446.0 342.0,446.0 342.6,446.0 343.1,446.0 343.7,446.0 344.2,446.0 344.8,446.0 345.4,446.0 345.9,446.0 346.5,446.0 347.0,446.0 347.6,446.0 348.2,446.0 348.7,446.0 349.3,446.0 349.8,446.0 350.4,446.0 351.0,446.0 351.5,446.0 352.1,446.0 352.6,446.0 353.2,446.0 353.8,446.0 354.3,446.0 354.9,446.0 355.4,446.0 356.0,446.0 356.6,446.0 357.1,446.0 357.7,446.0 358.2,446.0 358.8,446.0 359.4,446.0 359.9,446.0 360.5,446.0 361.0,446.0 361.6,446.0 362.2,446.0 362.7,446.0 363.3,446.0 363.8,446.0 364.4,446.0 365.0,445.9 365.5,445.9 366.1,445.9 366.6,445.8 367.2,445.8 367.8,445.7 368.3,445.6 368.9,445.5 369.4,445.4 370.0,445.2 370.6,445.1 371.1,444.9 371.7,444.7 372.2,444.4 372.8,444.2 373.4,443.9 373.9,443.5 374.5,443.2 375.0,442.8 375.6,442.3 376.2,441.9 376.7,441.4 377.3,440.8 377.8,440.2 378.4,439.6 379.0,439.0 379.5,438.3 380.1,437.5 380.6,436.8 381.2,436.0 381.8,435.1 382.3,434.3 382.9,433.4 383.4,432.5 384.0,431.5 384.6,430.6 385.1,429.6 385.7,428.5 386.2,427.5 386.8,426.4 387.4,425.4 387.9,424.3 388.5,423.1 389.0,422.0 389.6,420.9 390.2,419.7 390.7,418.6 391.3,417.4 391.8,416.2 392.4,415.0 393.0,413.9 393.5,412.7 394.1,411.5 394.6,410.2 395.2,409.0 395.8,407.8 396.3,406.6 396.9,405.4 397.4,404.2 398.0,402.9 398.6,401.7 399.1,400.5 399.7,399.2 400.2,398.0 400.8,396.7 401.4,395.5 401.9,394.3 402.5,393.0 403.0,391.8 403.6,390.5 404.2,389.3 404.7,388.0 405.3,386.8 405.8,385.5 406.4,384.3 407.0,383.0 407.5,381.8 408.1,380.5 408.6,379.3 409.2,378.0 409.8,376.8 410.3,375.5 410.9,374.3 411.4,373.0 412.0,371.7 412.6,370.5 413.1,369.2 413.7,368.0 414.2,366.7 414.8,365.5 415.4,364.2 415.9,362.9 416.5,361.7 417.0,360.4 417.6,359.2 418.2,357.9 418.7,356.7 419.3,355.4 419.8,354.1 420.4,352.9 421.0,351.6 421.5,350.4 422.1,349.1 422.6,347.8 423.2,346.6 423.8,345.3 424.3,344.1 424.9,342.8 425.4,341.5 426.0,340.3 426.6,339.0 427.1,337.8 427.7,336.5 428.2,335.2 428.8,334.0 429.4,332.7 429.9,331.5 430.5,330.2 431.0,328.9 431.6,327.7 432.2,326.4 432.7,325.2 433.3,323.9 433.8,322.6 434.4,321.4 435.0,320.1 435.5,318.9 436.1,317.6 436.6,316.3 437.2,315.1 437.8,313.8 438.3,312.5 438.9,311.3 439.4,310.0 440.0,308.8 440.6,307.5 441.1,306.2 441.7,305.0 442.2,303.7 442.8,302.5 443.4,301.2 443.9,299.9 444.5,298.7 445.0,297.4 445.6,296.2 446.2,294.9 446.7,293.6 447.3,292.4 447.8,291.1 448.4,289.8 449.0,288.6 449.5,287.3 450.1,286.1 450.6,284.8 451.2,283.5 451.8,282.3 452.3,281.0 452.9,279.8 453.4,278.5 454.0,277.2 454.6,276.0 455.1,274.7 455.7,273.5 456.2,272.2 456.8,270.9 457.4,269.7 457.9,268.4 458.5,267.1 459.0,265.9 459.6,264.6 460.2,263.4 460.7,262.1 461.3,260.8 461.8,259.6 462.4,258.3 463.0,257.1 463.5,255.8 464.1,254.5 464.6,253.3 465.2,252.0 465.8,250.7 466.3,249.5 466.9,248.2 467.4,247.0 468.0,245.7 468.6,244.4 469.1,243.2 469.7,241.9 470.2,240.7 470.8,239.4 471.4,238.1 471.9,236.9 472.5,235.6 473.0,234.3 473.6,233.1 474.2,231.8 474.7,230.6 475.3,229.3 475.8,228.0 476.4,226.8 477.0,225.5 477.5,224.3 478.1,223.0 478.6,221.7 479.2,220.5 479.8,219.2 480.3,218.0 480.9,216.7 481.4,215.4 482.0,214.2 482.6,212.9 483.1,211.6 483.7,210.4 484.2,209.1 484.8,207.9 485.4,206.6 485.9,205.3 486.5,204.1 487.0,202.8 487.6,201.6 488.2,200.3 488.7,199.0 489.3,197.8 489.8,196.5 490.4,195.2 491.0,194.0 491.5,192.7 492.1,191.5 492.6,190.2 493.2,188.9 493.8,187.7 494.3,186.4 494.9,185.2 495.4,183.9 496.0,182.6 496.6,181.4 497.1,180.1 497.7,178.8 498.2,177.6 498.8,176.3 499.4,175.1 499.9,173.8 500.5,172.5 501.0,171.3 501.6,170.0 502.2,168.8 502.7,167.5 503.3,166.3 503.8,165.0 504.4,163.8 505.0,162.5 505.5,161.3 506.1,160.1 506.6,158.9 507.2,157.7 507.8,156.5 508.3,155.3 508.9,154.1 509.4,153.0 510.0,151.9 510.6,150.8 511.1,149.7 511.7,148.7 512.2,147.6 512.8,146.6 513.4,145.7 513.9,144.7 514.5,143.8 515.0,143.0 515.6,142.2 516.2,141.4 516.7,140.6 517.3,139.9 517.8,139.2 518.4,138.6 519.0,138.0 519.5,137.4 520.1,136.9 520.6,136.4 521.2,135.9 521.8,135.5 522.3,135.1 522.9,134.7 523.4,134.3 524.0,134.0 524.6,133.7 525.1,133.5 525.7,133.2 526.2,133.0 526.8,132.8 527.4,132.6 527.9,132.5 528.5,132.3 529.0,132.2 529.6,132.1 530.2,132.0 530.7,131.9 531.3,131.8 531.8,131.7 532.4,131.6 533.0,131.5 533.5,131.5 534.1,131.4 534.6,131.3 535.2,131.3 535.8,131.3 536.3,131.2 536.9,131.2 537.4,131.1 538.0,131.1 538.6,131.1 539.1,131.0 539.7,131.0 540.2,131.0 540.8,131.0 541.4,131.0 541.9,130.9 542.5,130.9 543.0,130.9 543.6,130.9 544.2,130.9 544.7,130.9 545.3,130.8 545.8,130.8 546.4,130.8 547.0,130.8 547.5,130.8 548.1,130.8 548.6,130.8 549.2,130.8 549.8,130.8 550.3,130.8 550.9,130.8 551.4,130.8 552.0,130.8 552.6,130.7 553.1,130.7 553.7,130.7 554.2,130.7 554.8,130.7 555.4,130.7 555.9,130.7 556.5,130.7 557.0,130.7 557.6,130.7 558.2,130.7 558.7,130.7 559.3,130.7 559.8,130.7 560.4,130.7 561.0,130.7 561.5,130.7 562.1,130.7 562.6,130.7 563.2,130.7 563.8,130.7 564.3,130.7 564.9,130.7 565.4,130.7 566.0,130.7 566.6,130.7 567.1,130.7 567.7,130.7 568.2,130.7 568.8,130.7 569.4,130.7 569.9,130.7 570.5,130.7 571.0,130.7 571.6,130.7 572.2,130.7 572.7,130.7 573.3,130.7 573.8,130.7 574.4,130.7 575.0,130.7 575.5,130.7 576.1,130.7 576.6,130.7 577.2,130.8 577.8,130.8 578.3,130.9 578.9,130.9 579.4,131.0 580.0,131.1 580.6,131.2 581.1,131.4 581.7,131.5 582.2,131.7 582.8,131.9 583.4,132.1 583.9,132.4 584.5,132.7 585.0,133.0 585.6,133.3 586.2,133.7 586.7,134.1 587.3,134.6 587.8,135.0 588.4,135.6 589.0,136.1 589.5,136.7 590.1,137.4 590.6,138.0 591.2,138.8 591.8,139.5 592.3,140.3 592.9,141.1 593.4,141.9 594.0,142.8 594.6,143.7 595.1,144.6 595.7,145.6 596.2,146.6 596.8,147.6 597.4,148.6 597.9,149.7 598.5,150.8 599.0,151.8 599.6,152.9 600.2,154.1 600.7,155.2 601.3,156.3 601.8,157.5 602.4,158.7 603.0,159.8 603.5,161.0 604.1,162.2 604.6,163.4 605.2,164.6 605.8,165.8 606.3,167.0 606.9,168.2 607.4,169.4 608.0,170.7 608.6,171.9 609.1,173.1 609.7,174.3 610.2,175.6 610.8,176.8 611.4,178.0 611.9,179.3 612.5,180.5 613.0,181.8 613.6,183.0 614.2,184.3 614.7,185.5 615.3,186.7 615.8,188.0 616.4,189.2 617.0,190.5 617.5,191.7 618.1,193.0 618.6,194.2 619.2,195.5 619.8,196.8 620.3,198.0 620.9,199.3 621.4,200.5 622.0,201.8 622.6,203.0 623.1,204.3 623.7,205.5 624.2,206.8 624.8,208.1 625.4,209.3 625.9,210.6 626.5,211.8 627.0,213.1 627.6,214.3 628.2,215.6 628.7,216.9 629.3,218.1 629.8,219.4 630.4,220.6 631.0,221.9 631.5,223.1 632.1,224.4 632.6,225.7 633.2,226.9 633.8,228.2 634.3,229.4 634.9,230.7 635.4,232.0 636.0,233.2 636.6,234.5 637.1,235.7 637.7,237.0 638.2,238.3 638.8,239.5 639.4,240.8 639.9,242.0 640.5,243.3 641.0,244.6 641.6,245.8 642.2,247.1 642.7,248.3 643.3,249.6 643.8,250.9 644.4,252.1 645.0,253.4 645.5,254.6 646.1,255.9 646.6,257.2 647.2,258.4 647.8,259.7 648.3,261.0 648.9,262.2 649.4,263.5 650.0,264.7 650.6,266.0 651.1,267.3 651.7,268.5 652.2,269.8 652.8,271.0 653.4,272.3 653.9,273.6 654.5,274.8 655.0,276.1 655.6,277.3 656.2,278.6 656.7,279.9 657.3,281.1 657.8,282.4 658.4,283.6 659.0,284.9 659.5,286.2 660.1,287.4 660.6,288.7 661.2,290.0 661.8,291.2 662.3,292.5 662.9,293.7 663.4,295.0 664.0,296.3 664.6,297.5 665.1,298.8 665.7,300.0 666.2,301.3 666.8,302.6 667.4,303.8 667.9,305.1 668.5,306.4 669.0,307.6 669.6,308.9 670.2,310.1 670.7,311.4 671.3,312.7 671.8,313.9 672.4,315.2 673.0,316.4 673.5,317.7 674.1,319.0 674.6,320.2 675.2,321.5 675.8,322.7 676.3,324.0 676.9,325.3 677.4,326.5 678.0,327.8 678.6,329.1 679.1,330.3 679.7,331.6 680.2,332.8 680.8,334.1 681.4,335.4 681.9,336.6 682.5,337.9 683.0,339.1 683.6,340.4 684.2,341.7 684.7,342.9 685.3,344.2 685.8,345.5 686.4,346.7 687.0,348.0 687.5,349.2 688.1,350.5 688.6,351.8 689.2,353.0 689.8,354.3 690.3,355.5 690.9,356.8 691.4,358.1 692.0,359.3 692.6,360.6 693.1,361.9 693.7,363.1 694.2,364.4 694.8,365.6 695.4,366.9 695.9,368.2 696.5,369.4 697.0,370.7 697.6,371.9 698.2,373.2 698.7,374.5 699.3,375.7 699.8,377.0 700.4,378.3 701.0,379.5 701.5,380.8 702.1,382.0 702.6,383.3 703.2,384.6 703.8,385.8 704.3,387.1 704.9,388.3 705.4,389.6 706.0,390.9 706.6,392.1 707.1,393.4 707.7,394.6 708.2,395.9 708.8,397.2 709.4,398.4 709.9,399.7 710.5,401.0 711.0,402.2 711.6,403.5 712.2,404.7 712.7,406.0 713.3,407.3 713.8,408.5 714.4,409.8 715.0,411.0 715.5,412.3 716.1,413.5 716.6,414.7 717.2,416.0 717.8,417.2 718.3,418.4 718.9,419.6 719.4,420.8 720.0,421.9 720.6,423.1 721.1,424.2 721.7,425.3 722.2,426.4 722.8,427.5 723.4,428.5 723.9,429.5 724.5,430.5 725.0,431.4 725.6,432.4 726.2,433.2 726.7,434.1 727.3,434.9 727.8,435.7 728.4,436.4 729.0,437.1 729.5,437.8 730.1,438.4 730.6,439.0 731.2,439.5 731.8,440.0 732.3,440.5 732.9,441.0 733.4,441.4 734.0,441.8 734.6,442.1 735.1,442.5 735.7,442.8 736.2,443.0 736.8,443.3 736.8,443.3"/>
</svg>
<div class="ax" style="right:489.5px;top:440.8px">0</div>
<div class="ax" style="right:489.5px;top:415.5px">2000</div>
<div class="ax" style="right:489.5px;top:390.2px">4000</div>
<div class="ax" style="right:489.5px;top:364.9px">6000</div>
<div class="ax" style="right:489.5px;top:339.6px">8000</div>
<div class="ax" style="right:489.5px;top:314.3px">10000</div>
<div class="ax" style="right:489.5px;top:289.0px">12000</div>
<div class="ax" style="right:489.5px;top:263.7px">14000</div>
<div class="ax" style="right:489.5px;top:238.4px">16000</div>
<div class="ax" style="right:489.5px;top:213.1px">18000</div>
<div class="ax" style="right:489.5px;top:187.8px">20000</div>
<div class="ax" style="right:489.5px;top:162.5px">22000</div>
<div class="ax" style="right:489.5px;top:137.2px">24000</div>
<div class="ax" style="right:489.5px;top:111.9px">26000</div>
<div class="ax" style="left:746px;top:440.2px">0.0</div>
<div class="ax" style="left:746px;top:412.3px">0.1</div>
<div class="ax" style="left:746px;top:384.5px">0.2</div>
<div class="ax" style="left:746px;top:356.6px">0.3</div>
<div class="ax" style="left:746px;top:328.8px">0.4</div>
<div class="ax" style="left:746px;top:300.9px">0.5</div>
<div class="ax" style="left:746px;top:273.0px">0.6</div>
<div class="ax" style="left:746px;top:245.2px">0.7</div>
<div class="ax" style="left:746px;top:217.3px">0.8</div>
<div class="ax" style="left:746px;top:189.5px">0.9</div>
<div class="ax" style="left:746px;top:161.6px">1.0</div>
<div class="ax" style="left:746px;top:133.7px">1.1</div>
<div class="ax" style="left:306.8px;top:469.3px">0.0</div>
<div class="ax" style="left:376.8px;top:469.3px">0.5</div>
<div class="ax" style="left:446.8px;top:469.3px">1.0</div>
<div class="ax" style="left:516.8px;top:469.3px">1.5</div>
<div class="ax" style="left:586.8px;top:469.3px">2.0</div>
<div class="ax" style="left:656.8px;top:469.3px">2.5</div>
<div class="ax" style="left:726.8px;top:469.3px">3.0</div>
</div>
</body></html>
